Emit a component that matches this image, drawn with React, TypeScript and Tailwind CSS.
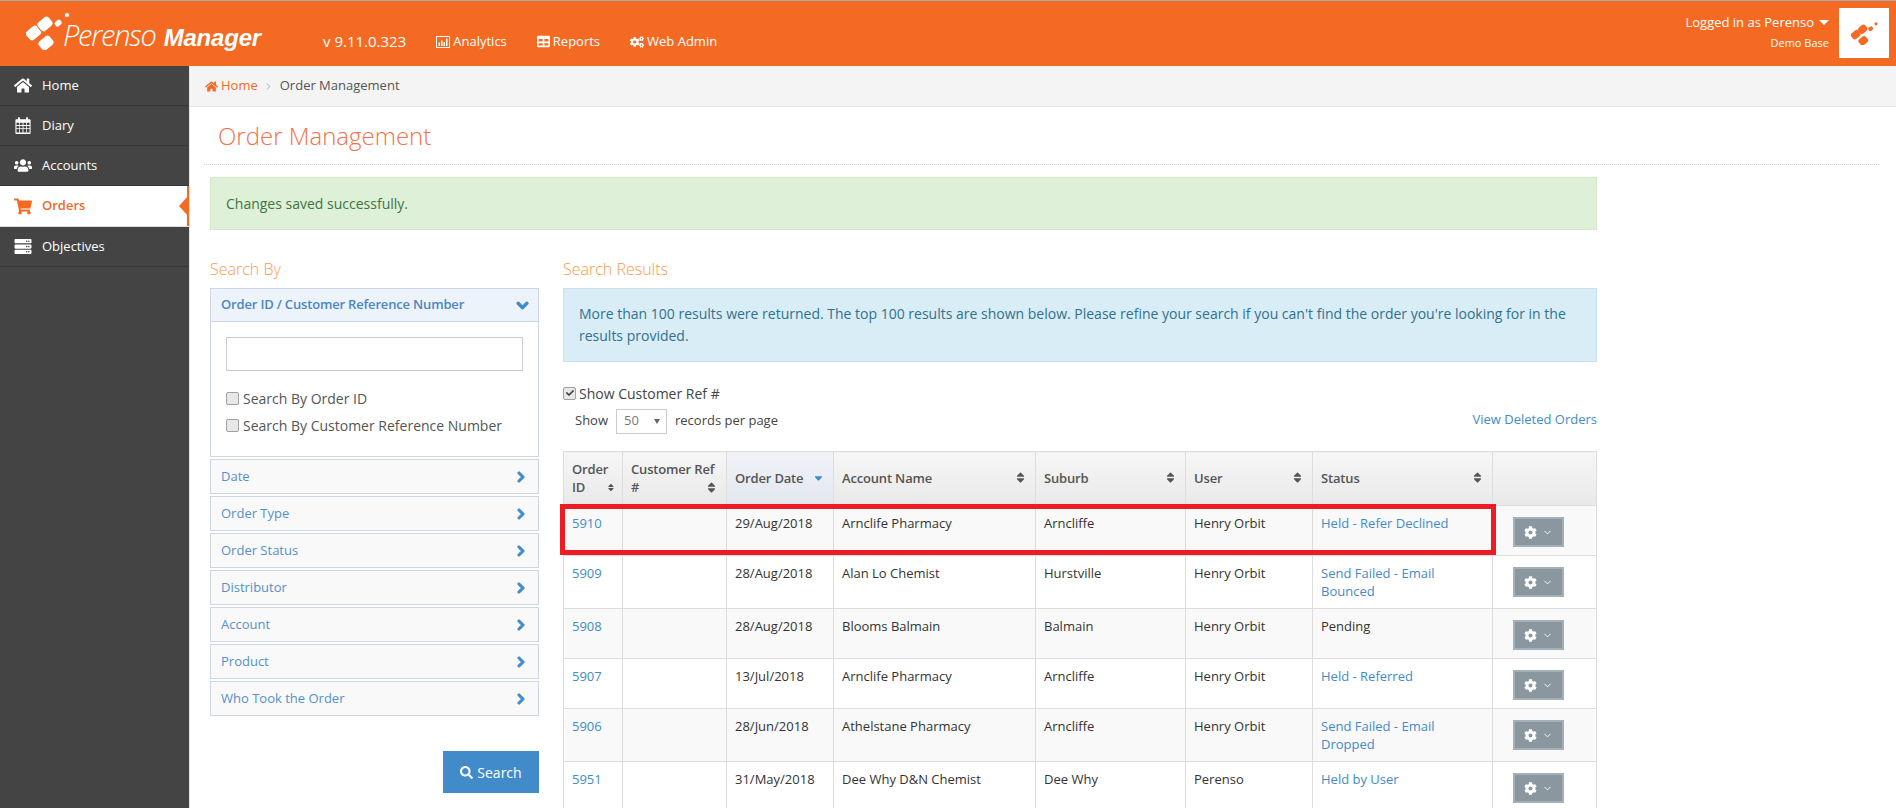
import {
  FaCheck,
  FaChevronDown,
  FaChevronRight,
  FaCog,
  FaCogs,
  FaHome,
  FaSearch,
  FaServer,
  FaShoppingCart,
  FaSort,
  FaSortDown,
  FaTable,
  FaUsers,
} from "react-icons/fa";
import { FiChevronDown, FiChevronRight } from "react-icons/fi";

function DiaryIcon({ className }: { className?: string }) {
  return (
    <svg viewBox="0 0 18 19" className={className} fill="currentColor">
      <path d="M1.5 2.5h2V1a1 1 0 0 1 2 0v1.5h7V1a1 1 0 0 1 2 0v1.5h2a1 1 0 0 1 1 1V18a1 1 0 0 1-1 1h-15a1 1 0 0 1-1-1V3.500a1 1 0 0 1 1-1z" />
      <path fill="#444444" d="M1.700 6.500h3v2.500h-3zM5.500 6.500h3v2.500h-3zM9.500 6.500h3v2.500h-3zM13.300 6.500h3v2.500h-3zM1.700 10h3v2.500h-3zM5.500 10h3v2.500h-3zM9.500 10h3v2.500h-3zM13.300 10h3v2.500h-3zM1.700 13.500h3v3.800h-3zM5.500 13.500h3v3.800h-3zM9.500 13.500h3v3.800h-3zM13.300 13.500h3v3.800h-3z" />
    </svg>
  );
}

function AnalyticsIcon({ className }: { className?: string }) {
  return (
    <svg viewBox="0 0 14 12" className={className} fill="currentColor">
      <path d="M0 0h14v12H0zM1 1v10h12V1z" fillRule="evenodd" />
      <path d="M2.500 6.500h1.500V10H2.500zM5 4.500h1.500V10H5zM7.500 6h1.500v4H7.500zM10 2.500h1.500V10H10z" />
    </svg>
  );
}

const navItems = [
  { label: "Home", icon: FaHome },
  { label: "Diary", icon: DiaryIcon },
  { label: "Accounts", icon: FaUsers },
  { label: "Orders", icon: FaShoppingCart, active: true },
  { label: "Objectives", icon: FaServer },
];

const panels = ["Date", "Order Type", "Order Status", "Distributor", "Account", "Product", "Who Took the Order"];

const orders = [
  { id: "5910", date: "29/Aug/2018", account: "Arnclife Pharmacy", suburb: "Arncliffe", user: "Henry Orbit", status: "Held - Refer Declined", h: "h-[50px]" },
  { id: "5909", date: "28/Aug/2018", account: "Alan Lo Chemist", suburb: "Hurstville", user: "Henry Orbit", status: "Send Failed - Email Bounced", h: "h-[53px]" },
  { id: "5908", date: "28/Aug/2018", account: "Blooms Balmain", suburb: "Balmain", user: "Henry Orbit", status: "Pending", plain: true, h: "h-[50px]" },
  { id: "5907", date: "13/Jul/2018", account: "Arnclife Pharmacy", suburb: "Arncliffe", user: "Henry Orbit", status: "Held - Referred", h: "h-[50px]" },
  { id: "5906", date: "28/Jun/2018", account: "Athelstane Pharmacy", suburb: "Arncliffe", user: "Henry Orbit", status: "Send Failed - Email Dropped", h: "h-[53px]" },
  { id: "5951", date: "31/May/2018", account: "Dee Why D&N Chemist", suburb: "Dee Why", user: "Perenso", status: "Held by User", h: "h-[50px]" },
];

function LogoMark({ className }: { className: string }) {
  return (
    <svg viewBox="0 0 44 38" className={className} fill="currentColor">
      <rect x="0" y="15" width="15" height="12" rx="4" transform="rotate(-40 7.500 21)" />
      <rect x="11.500" y="6" width="15" height="12" rx="4" transform="rotate(-40 19 12)" />
      <rect x="12.500" y="25" width="15" height="12" rx="4" transform="rotate(-40 20 31)" />
      <rect x="28" y="8" width="8" height="6.500" rx="2.500" transform="rotate(-40 32 11)" />
      <circle cx="41" cy="3" r="2.600" />
    </svg>
  );
}

function Header() {
  return (
    <header className="flex h-[66px] shrink-0 border-t border-[#a9a9a9] bg-[#f56a23] text-white">
      <div className="flex w-[323px] shrink-0 items-center pb-[6px] pl-[26px]">
        <LogoMark className="h-[38px] w-[44px] shrink-0 stroke-[#f56a23] stroke-1 text-white" />
        <div className="-ml-[7px] flex items-baseline pt-[8px]">
          <span className="text-[29px] font-light italic tracking-[-1.2px]">Perenso</span>
          <span className="ml-[8px] font-['Liberation_Sans',sans-serif] text-[24px] font-bold italic tracking-[-0.2px]">Manager</span>
        </div>
      </div>
      <nav className="flex items-center gap-[30px] pt-[16px] text-[13px]">
        <span className="text-[15px]">v 9.11.0.323</span>
        <span className="flex items-center gap-[3px]"><AnalyticsIcon className="h-[12px] w-[14px]" />Analytics</span>
        <span className="flex items-center gap-[3px]"><FaTable className="text-[13px]" />Reports</span>
        <span className="flex items-center gap-[3px]"><FaCogs className="text-[14px]" />Web Admin</span>
      </nav>
      <div className="ml-auto flex items-start gap-[10px] pt-[7px] pr-[7px]">
        <div className="flex flex-col items-end">
          <span className="flex items-center gap-[5px] text-[13px] leading-[29px]">
            Logged in as Perenso
            <span className="h-0 w-0 border-x-[5px] border-t-[5px] border-x-transparent border-t-white" />
          </span>
          <span className="text-[11px] font-medium leading-[12px]">Demo Base</span>
        </div>
        <div className="flex h-[50px] w-[50px] items-center justify-center bg-white">
          <LogoMark className="h-[23px] w-[27px] text-[#f56a23]" />
        </div>
      </div>
    </header>
  );
}

function Sidebar() {
  return (
    <aside className="w-[189px] shrink-0 bg-[#444444]">
      {navItems.map((item) => (
        <div
          key={item.label}
          className={
            item.active
              ? "relative flex h-[41px] items-center border-b border-[#dddddd] bg-white pl-[13px] font-semibold text-[#f56a23]"
              : "flex h-[40px] items-center border-b border-[#383838] pl-[13px] text-white"
          }
        >
          <item.icon className="mx-[1px] h-[17px] w-[18px] shrink-0" />
          <span className="ml-[9px] text-[13px]">{item.label}</span>
          {item.active && (
            <span className="absolute top-0 right-0 h-[40px] w-[2px] bg-[#f56a23]">
              <span className="absolute top-[9px] right-0 h-0 w-0 border-y-[11px] border-r-[10px] border-y-transparent border-r-[#f56a23]" />
            </span>
          )}
        </div>
      ))}
    </aside>
  );
}

function Check({ checked }: { checked?: boolean }) {
  return (
    <span className="flex h-[13px] w-[13px] shrink-0 items-center justify-center rounded-[2px] border border-[#a0a0a0] bg-[#e8e8e8] text-[#333333]">
      {checked && <FaCheck className="text-[8px]" />}
    </span>
  );
}

function SearchBy() {
  return (
    <section className="w-[329px] shrink-0">
      <h3 className="text-[16px] leading-[22px] font-light text-[#fb9a4e]">Search By</h3>
      <div className="mt-[8px] border border-[#cdd7e3]">
        <div className="flex h-[33px] items-center justify-between border-b border-[#cdd7e3] bg-[#edf3fa] pr-[9px] pl-[10px] font-semibold tracking-[-0.17px] text-[#4a86c5]">
          <span>Order ID / Customer Reference Number</span>
          <FaChevronDown className="stroke-[50px] text-[13px] text-[#428bca]" />
        </div>
        <div className="h-[134px] px-[15px] pt-[15px] text-[14px] text-[#555555]">
          <input className="block h-[34px] w-[297px] border border-[#cccccc] bg-white" />
          <label className="mt-[18px] flex h-[18px] items-center gap-[4px]"><Check />Search By Order ID</label>
          <label className="mt-[9px] flex h-[18px] items-center gap-[4px]"><Check />Search By Customer Reference Number</label>
        </div>
      </div>
      <div className="mt-[2px] flex flex-col gap-[2px]">
        {panels.map((p) => (
          <div key={p} className="flex h-[35px] items-center justify-between border border-[#cdd7e3] bg-[#f9f9f9] pr-[11px] pl-[10px] text-[#5590cc]">
            {p}
            <FaChevronRight className="stroke-[50px] text-[12px] text-[#428bca]" />
          </div>
        ))}
      </div>
      <div className="mt-[35px] flex justify-end">
        <button className="flex h-[42px] w-[96px] items-center justify-center gap-[4px] bg-[#428bca] text-[14px] text-white">
          <FaSearch className="text-[13px]" />Search
        </button>
      </div>
    </section>
  );
}

function Th({ children, className = "" }: { children?: React.ReactNode; className?: string }) {
  return (
    <th className={"border border-[#dddddd] bg-gradient-to-b px-[8px] pb-[2px] text-left align-middle font-semibold leading-[18px] tracking-[-0.17px] text-[#555555] " + className}>
      {children}
    </th>
  );
}

function OrdersTable() {
  return (
    <table className="w-[1033px] table-fixed border-collapse">
      <colgroup>
        <col className="w-[59px]" />
        <col className="w-[104px]" />
        <col className="w-[107px]" />
        <col className="w-[202px]" />
        <col className="w-[150px]" />
        <col className="w-[127px]" />
        <col className="w-[180px]" />
        <col className="w-[104px]" />
      </colgroup>
      <thead>
        <tr className="h-[54px]">
          <Th className="from-[#f6f6f6] to-[#e9e9e9]"><div className="flex items-end justify-between"><span>Order<br />ID</span><FaSort className="mb-[2px] text-[13px]" /></div></Th>
          <Th className="from-[#f6f6f6] to-[#e9e9e9]"><div className="flex items-end justify-between"><span className="w-[70px] whitespace-nowrap">Customer Ref<br />#</span><FaSort className="mb-[2px] text-[13px]" /></div></Th>
          <Th className="from-[#f0f2f6] to-[#e3e7ef]"><div className="flex items-center justify-between">Order Date<FaSortDown className="mb-[4px] text-[13px] text-[#428bca]" /></div></Th>
          <Th className="from-[#f6f6f6] to-[#e9e9e9]"><div className="flex items-center justify-between">Account Name<FaSort className="text-[13px]" /></div></Th>
          <Th className="from-[#f6f6f6] to-[#e9e9e9]"><div className="flex items-center justify-between">Suburb<FaSort className="text-[13px]" /></div></Th>
          <Th className="from-[#f6f6f6] to-[#e9e9e9]"><div className="flex items-center justify-between">User<FaSort className="text-[13px]" /></div></Th>
          <Th className="from-[#f6f6f6] to-[#e9e9e9]"><div className="flex items-center justify-between">Status<FaSort className="text-[13px]" /></div></Th>
          <Th className="from-[#f6f6f6] to-[#e9e9e9]" />
        </tr>
      </thead>
      <tbody>
        {orders.map((o, i) => (
          <tr key={o.id} className={o.h + (i % 2 === 0 ? " bg-[#f9f9f9]" : " bg-white")}>
            <td className="border border-[#dddddd] px-[8px] pt-[8px] align-top leading-[18px] text-[#428bca]">{o.id}</td>
            <td className="border border-[#dddddd]" />
            <td className="border border-[#dddddd] px-[8px] pt-[8px] align-top leading-[18px]">{o.date}</td>
            <td className="border border-[#dddddd] px-[8px] pt-[8px] align-top leading-[18px]">{o.account}</td>
            <td className="border border-[#dddddd] px-[8px] pt-[8px] align-top leading-[18px]">{o.suburb}</td>
            <td className="border border-[#dddddd] px-[8px] pt-[8px] align-top leading-[18px]">{o.user}</td>
            <td className={"border border-[#dddddd] px-[8px] pt-[8px] align-top leading-[18px] " + (o.plain ? "" : "text-[#428bca]")}>{o.status}</td>
            <td className="border border-[#dddddd] pt-[11px] pl-[20px] align-top">
              <button className="flex h-[30px] w-[51px] items-center justify-center gap-[5px] border-2 border-[#a4b0b8] bg-[#8a979f] text-white">
                <FaCog className="text-[13px]" />
                <FiChevronDown className="text-[11px]" />
              </button>
            </td>
          </tr>
        ))}
      </tbody>
    </table>
  );
}

function SearchResults() {
  return (
    <section className="w-[1034px] shrink-0">
      <h3 className="text-[16px] leading-[22px] font-light text-[#fb9a4e]">Search Results</h3>
      <div className="mt-[8px] h-[74px] border border-[#c5e4ee] bg-[#d9edf7] px-[15px] py-[14px] text-[14px] leading-[22px] text-[#31708f]">
        More than 100 results were returned. The top 100 results are shown below. Please refine your search if you can't find the order you're looking for in the results provided.
      </div>
      <label className="mt-[22px] flex h-[18px] items-center gap-[3px] text-[14px] text-[#444444]"><Check checked />Show Customer Ref #</label>
      <div className="mt-[7px] flex h-[24px] items-center justify-between">
        <div className="flex items-center pl-[12px] text-[#444444]">
          Show
          <span className="mx-[8px] flex h-[25px] w-[51px] items-center justify-between border border-[#cccccc] pr-[6px] pl-[7px] text-[#777777]">
            50
            <span className="h-0 w-0 border-x-[3px] border-t-[5px] border-x-transparent border-t-[#666666]" />
          </span>
          records per page
        </div>
        <span className="mb-[3px] text-[#428bca]">View Deleted Orders</span>
      </div>
      <div className="relative mt-[18px]">
        <OrdersTable />
        <div className="absolute top-[53px] -left-[3px] h-[51px] w-[936px] border-[5px] border-[#ed1c24]" />
      </div>
    </section>
  );
}

export default function App() {
  return (
    <div className="flex h-screen w-screen flex-col overflow-hidden bg-white font-['Open_Sans',sans-serif] text-[13px] text-[#333333]">
      <Header />
      <div className="flex min-h-0 flex-1">
        <Sidebar />
        <main className="min-w-0 flex-1 border-l border-[#e4e4e4]">
          <div className="flex h-[41px] items-center border-b border-[#e4e4e4] bg-[#f4f4f4] pl-[15px]">
            <FaHome className="text-[13px] text-[#f56a23]" />
            <span className="ml-[3px] text-[#f56a23]">Home</span>
            <FiChevronRight className="mr-[6px] ml-[5px] text-[11px] text-[#aaaaaa]" />
            <span className="text-[#555555]">Order Management</span>
          </div>
          <div className="mr-[17px] ml-[14px] flex h-[58px] items-end border-b border-dotted border-[#d0d0d0] pb-[12px] pl-[14px]">
            <h1 className="text-[24px] leading-[33px] font-light text-[#f4714a]">Order Management</h1>
          </div>
          <div className="pl-[20px]">
            <div className="mt-[12px] flex h-[53px] w-[1387px] items-center border border-[#d6e9c6] bg-[#dff0d8] px-[15px] text-[14px] text-[#3c763d]">
              Changes saved successfully.
            </div>
            <div className="mt-[28px] flex gap-[24px]">
              <SearchBy />
              <SearchResults />
            </div>
          </div>
        </main>
      </div>
    </div>
  );
}
